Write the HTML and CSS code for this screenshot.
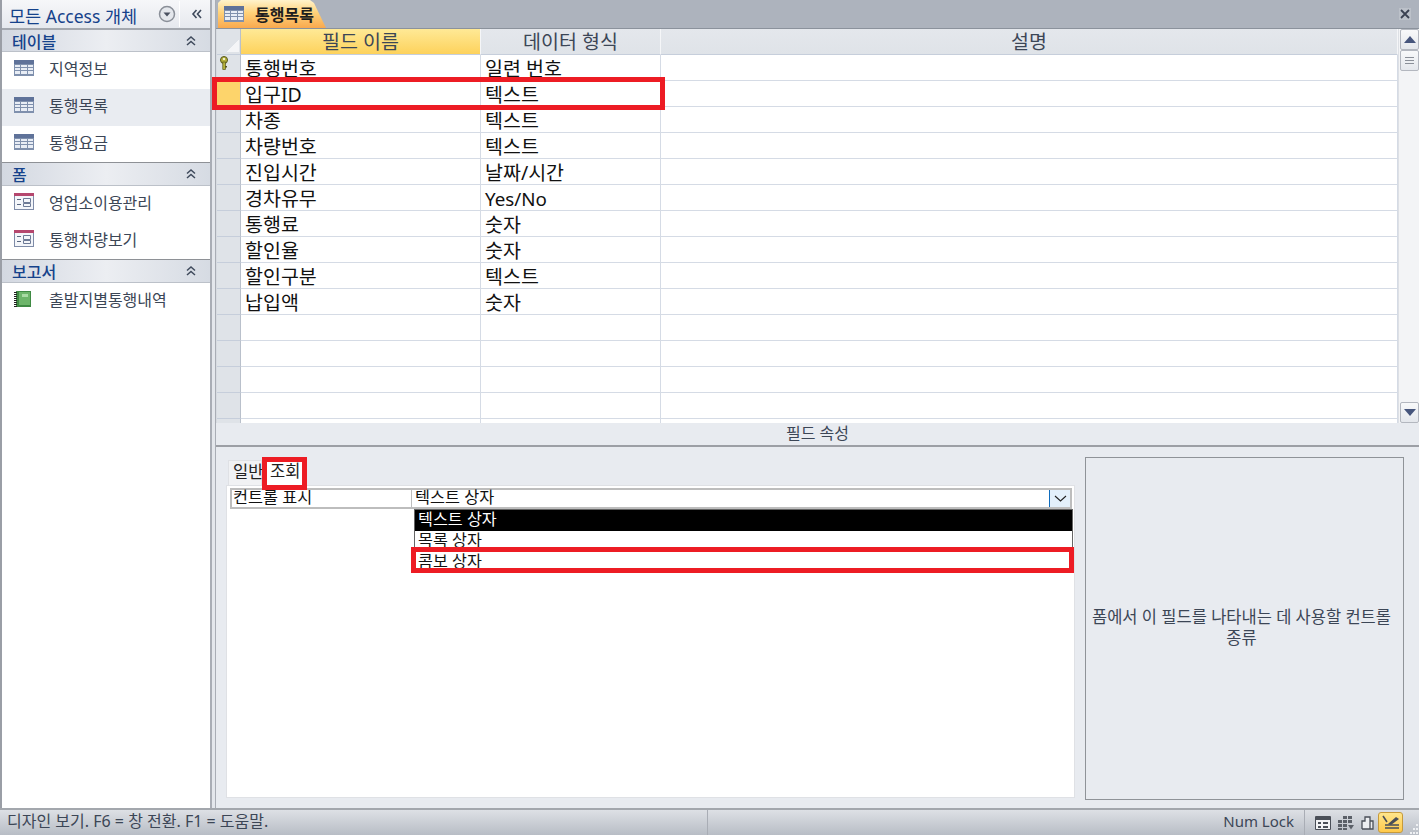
FILE: index.html
```html
<!DOCTYPE html>
<html lang="ko">
<head>
<meta charset="utf-8">
<title>통행목록</title>
<link rel="stylesheet" href="styles.css">
</head>
<body>
<svg class="defs" width="0" height="0" aria-hidden="true">
  <symbol id="i-table" viewBox="0 0 20 16">
    <rect x="0" y="0" width="20" height="16" fill="#7f90ad"/>
    <rect x="0" y="0" width="20" height="4" fill="#5f7299"/>
    <path d="M1 5h5v2H1zM7 5h6v2H7zM14 5h5v2h-5zM1 8h5v2H1zM7 8h6v2H7zM14 8h5v2h-5zM1 11h5v3H1zM7 11h6v3H7zM14 11h5v3h-5z" fill="#e8edf5"/>
  </symbol>
  <symbol id="i-form" viewBox="0 0 20 17">
    <rect x="0" y="0" width="20" height="17" fill="#7f8ca8"/>
    <rect x="1" y="3" width="18" height="13" fill="#f4f6fa"/>
    <rect x="0" y="0" width="20" height="3" fill="#b5476e"/>
    <path d="M3 6h4v1H3zM3 11h4v1H3z" fill="#5a6780"/>
    <path d="M9.500 5.500h7v4h-7zM9.500 10.500h7v3h-7z" fill="none" stroke="#6d7a96"/>
  </symbol>
  <symbol id="i-report" viewBox="0 0 17 16">
    <rect x="2" y="0" width="15" height="16" fill="#3f8a43"/>
    <rect x="5" y="1" width="11" height="13" fill="#6db56a"/>
    <rect x="8" y="3" width="6" height="3" fill="#a9dba4"/>
    <path d="M0 1h3v1H0zM0 3h3v1H0zM0 5h3v1H0zM0 7h3v1H0zM0 9h3v1H0zM0 11h3v1H0zM0 13h3v1H0zM0 15h3v1H0z" fill="#222"/>
  </symbol>
  <symbol id="i-up2" viewBox="0 0 12 12">
    <path d="M2 5.500 6 2l4 3.500M2 10 6 6.500l4 3.500" fill="none" stroke="#3f4a5c" stroke-width="1.500"/>
  </symbol>
</svg>

<div class="app">
  <nav class="nav">
    <div class="nav-head">
      <span class="nav-title">모든 Access 개체</span>
      <svg class="nav-drop" width="18" height="18" viewBox="0 0 18 18"><circle cx="9" cy="9" r="7.500" fill="#e4e7ec" stroke="#8a8f98" stroke-width="1.500"/><path d="M5.500 7.500h7L9 11.500z" fill="#4a5160"/></svg>
      <span class="nav-sep"></span>
      <svg class="nav-collapse" width="12" height="12" viewBox="0 0 12 12"><path d="M5.500 2 2 6l3.500 4M10 2 6.500 6l3.500 4" fill="none" stroke="#3f4a5c" stroke-width="1.600"/></svg>
    </div>
    <div class="group">테이블<svg class="up2"><use href="#i-up2"/></svg></div>
    <div class="item"><svg class="ic-t"><use href="#i-table"/></svg>지역정보</div>
    <div class="item sel"><svg class="ic-t"><use href="#i-table"/></svg>통행목록</div>
    <div class="item"><svg class="ic-t"><use href="#i-table"/></svg>통행요금</div>
    <div class="group">폼<svg class="up2"><use href="#i-up2"/></svg></div>
    <div class="item"><svg class="ic-f"><use href="#i-form"/></svg>영업소이용관리</div>
    <div class="item"><svg class="ic-f"><use href="#i-form"/></svg>통행차량보기</div>
    <div class="group">보고서<svg class="up2"><use href="#i-up2"/></svg></div>
    <div class="item"><svg class="ic-r"><use href="#i-report"/></svg>출발지별통행내역</div>
  </nav>
  <div class="split"></div>
  <main class="main">
    <div class="tabbar">
      <div class="doc-tab"><svg class="ic-d"><use href="#i-table"/></svg>통행목록</div>
      <span class="close"><svg width="10" height="10" viewBox="0 0 10 10"><path d="M1 1l8 8M9 1l-8 8" stroke="#3b4252" stroke-width="1.800"/></svg></span>
    </div>
    <div class="design">
      <div class="grid">
        <div class="sel-cell head-corner"><span class="corner"></span></div>
        <div class="hcell hcur">필드 이름</div>
        <div class="hcell">데이터 형식</div>
        <div class="hcell">설명</div>

        <div class="sel-cell"><svg class="key" width="10" height="14" viewBox="0 0 10 14"><circle cx="5" cy="4" r="3.500" fill="#b6b23c" stroke="#55561c"/><rect x="3.800" y="6" width="2.600" height="7.500" fill="#b6b23c" stroke="#55561c" stroke-width=".7"/><rect x="6" y="10" width="2" height="1.500" fill="#55561c"/><circle cx="5" cy="3" r="1" fill="#fff"/></svg></div><div class="cell">통행번호</div><div class="cell">일련 번호</div><div class="cell"></div>
        <div class="sel-cell cur"></div><div class="cell">입구ID</div><div class="cell">텍스트</div><div class="cell"></div>
        <div class="sel-cell"></div><div class="cell">차종</div><div class="cell">텍스트</div><div class="cell"></div>
        <div class="sel-cell"></div><div class="cell">차량번호</div><div class="cell">텍스트</div><div class="cell"></div>
        <div class="sel-cell"></div><div class="cell">진입시간</div><div class="cell">날짜/시간</div><div class="cell"></div>
        <div class="sel-cell"></div><div class="cell">경차유무</div><div class="cell"><span class="latin">Yes/No</span></div><div class="cell"></div>
        <div class="sel-cell"></div><div class="cell">통행료</div><div class="cell">숫자</div><div class="cell"></div>
        <div class="sel-cell"></div><div class="cell">할인율</div><div class="cell">숫자</div><div class="cell"></div>
        <div class="sel-cell"></div><div class="cell">할인구분</div><div class="cell">텍스트</div><div class="cell"></div>
        <div class="sel-cell"></div><div class="cell">납입액</div><div class="cell">숫자</div><div class="cell"></div>
        <div class="sel-cell"></div><div class="cell"></div><div class="cell"></div><div class="cell"></div>
        <div class="sel-cell"></div><div class="cell"></div><div class="cell"></div><div class="cell"></div>
        <div class="sel-cell"></div><div class="cell"></div><div class="cell"></div><div class="cell"></div>
        <div class="sel-cell"></div><div class="cell"></div><div class="cell"></div><div class="cell"></div>
        <div class="sel-cell"></div><div class="cell"></div><div class="cell"></div><div class="cell"></div>
      </div>
      <div class="vscroll">
        <div class="sbtn"><svg width="12" height="7" viewBox="0 0 12 7"><path d="M6 0l6 7H0z" fill="#46557c"/></svg></div>
        <div class="sbtn"><svg width="9" height="7" viewBox="0 0 9 7"><path d="M0 .5h9M0 3.500h9M0 6.500h9" stroke="#8a8f98"/></svg></div>
        <div class="strack"></div>
        <div class="sbtn"><svg width="12" height="7" viewBox="0 0 12 7"><path d="M0 0h12L6 7z" fill="#46557c"/></svg></div>
      </div>
      <div class="red red-row"></div>
    </div>
    <div class="prop-title">필드 속성</div>
    <div class="props">
      <div class="sheet-wrap">
        <div class="ptabs">
          <div class="ptab">일반</div>
          <div class="ptab on">조회</div>
        </div>
        <div class="sheet">
          <div class="prow">
            <div class="plabel">컨트롤 표시</div>
            <div class="pvalue"><span>텍스트 상자</span><span class="dropbtn"><svg width="13" height="7" viewBox="0 0 13 7"><path d="M1 1l5.500 5L12 1" fill="none" stroke="#222" stroke-width="1.100"/></svg></span></div>
          </div>
          <div class="list">
            <div class="opt hot">텍스트 상자</div>
            <div class="opt">목록 상자</div>
            <div class="opt">콤보 상자</div>
          </div>
          <div class="red red-opt"></div>
        </div>
        <div class="red red-tab"></div>
      </div>
      <div class="help"><span class="help-text">폼에서 이 필드를 나타내는 데 사용할 컨트롤 종류</span></div>
    </div>
  </main>
</div>
<footer class="status">
  <div class="st-text">디자인 보기. F6 = 창 전환. F1 = 도움말.</div>
  <div class="st-num">Num Lock</div>
  <div class="st-icons">
    <svg class="st-ic" width="16" height="14" viewBox="0 0 16 14"><path d="M.5.5h15v13H.5z" fill="#f2f3f5" stroke="#4a4f58"/><path d="M1 1h14v3H1z" fill="#4a4f58"/><path d="M3 6h3v2H3zM3 10h3v2H3zM8 6h5v2H8zM8 10h5v2H8z" fill="#4a4f58"/></svg>
    <svg class="st-ic" width="16" height="14" viewBox="0 0 16 14"><path d="M5 0h4v3H5zM10 0h4v3h-4zM0 4h4v3H0zM5 4h4v3H5zM10 4h4v3h-4zM0 8h4v3H0zM5 8h4v3H5zM0 12h4v2H0zM5 12h4v2H5z" fill="#5b6068"/><path d="M10 9h6l-3 4.500z" fill="#5b6068"/></svg>
    <svg class="st-ic" width="16" height="14" viewBox="0 0 16 14"><path d="M1 13V5h3V1h5v12M9 5h3v8H1" fill="#eceef1" stroke="#4a4f58" stroke-width="1.300"/></svg>
    <span class="st-active"><svg width="18" height="16" viewBox="0 0 18 16"><path d="M1 1l4 6M3 10h14M3 13h14" stroke="#4a4f58" stroke-width="1.600" fill="none"/><path d="M6 9l8-7 3 2-8 6z" fill="#4a4f58"/></svg></span>
    <svg class="grip" width="9" height="12" viewBox="0 0 9 12"><path d="M6 1h2v2H6zM3 5h2v2H3zM6 5h2v2H6zM0 9h2v2H0zM3 9h2v2H3zM6 9h2v2H6z" fill="#eef0f3"/></svg>
  </div>
</footer>
</body>
</html>
```
FILE: styles.css
```css
* { box-sizing: border-box; }
html, body { margin: 0; padding: 0; }
body {
  width: 1419px;
  height: 835px;
  overflow: hidden;
  display: flex;
  flex-direction: column;
  background: #e8ebf0;
  font-family: "Noto Sans", "Noto Sans CJK KR", sans-serif;
  color: #111;
}
.defs { position: absolute; }
.app { flex: 1; min-height: 0; display: flex; }

/* navigation pane */
.nav {
  width: 212px;
  background: #fff;
  border-left: 2px solid #9a9ea6;
  border-right: 2px solid #a9adb5;
  display: flex;
  flex-direction: column;
}
.nav-head {
  height: 30px;
  display: flex;
  align-items: center;
  padding-left: 7px;
  background: linear-gradient(#f6f7f9, #e6e9ee);
  border-bottom: 2px solid #a4a8af;
}
.nav-title { color: #15428b; font-size: 17.500px; width: 149px; white-space: nowrap; line-height: 28px; padding-top: 3px; }
.nav-sep { width: 1px; height: 26px; background: #fff; margin-left: 3px; }
.nav-collapse { margin-left: 11px; }
.group {
  height: 22px;
  display: flex;
  align-items: center;
  justify-content: space-between;
  padding: 0 13px 0 10px;
  font-size: 16px;
  font-weight: 500;
  color: #15428b;
  background: linear-gradient(90deg, #d3d8e1, #eceef2 50%, #d6dbe3);
  border-top: 1px solid #8e9196;
  border-bottom: 1px solid #bcc1c9;
  box-sizing: content-box;
  margin-top: -1px;
}
.nav-head + .group { border-top: 0; margin-top: 0; height: 21px; }
.up2 { width: 12px; height: 12px; }
.item {
  height: 37px;
  display: flex;
  align-items: center;
  padding: 0 0 6px 12px;
  color: #3c4656;
  font-size: 16px;
  white-space: nowrap;
}
.item.sel { background: #e9ecf1; }
.ic-t { width: 20px; height: 16px; margin-right: 15px; flex: none; }
.ic-f { width: 20px; height: 17px; margin-right: 15px; flex: none; }
.ic-r { width: 17px; height: 16px; margin-right: 18px; flex: none; }
.split { width: 4px; background: #e4e7ec; border-right: 1px solid #a9adb5; }

/* main */
.main { flex: 1; min-width: 0; display: flex; flex-direction: column; }
.tabbar {
  height: 29px;
  flex: none;
  background: #adb3bd;
  border-bottom: 1px solid #8b929c;
  display: flex;
  align-items: flex-end;
  justify-content: space-between;
  padding: 0 8px 0 2px;
}
.doc-tab {
  width: 108px;
  height: 28px;
  display: flex;
  align-items: center;
  padding-left: 5px;
  font-size: 16px;
  font-weight: 700;
  color: #1e1e1e;
  background: linear-gradient(#fff3cc, #ffd27a 45%, #f9a94e);
  clip-path: polygon(0 100%, 0 3px, 3px 0, 92px 0, 96px 3px, 108px 100%);
  white-space: nowrap;
}
.ic-d { width: 22px; height: 16px; margin-right: 10px; flex: none; }
.close { align-self: center; width: 12px; height: 12px; display: flex; align-items: center; justify-content: center; background: #bcc1c9; }

/* design grid */
.design { height: 394px; flex: none; display: flex; position: relative; background: #fff; }
.grid {
  flex: 1;
  overflow: hidden;
  display: grid;
  grid-template-columns: 24px 240px 180px 1fr;
  grid-auto-rows: 26px;
  border-left: 1px solid #d7dbe1;
}
.sel-cell {
  background: #dfe3e8;
  border-bottom: 1px solid #c6cedb;
  border-right: 1px solid #b9c0cb;
  padding: 1px 0 0 2px;
}
.sel-cell.cur { background: #fdd46b; }
.head-corner { display: flex; justify-content: flex-end; align-items: flex-end; padding: 0 1px 2px 0; }
.corner { width: 13px; height: 13px; background: linear-gradient(135deg, transparent 50%, #f4f5f7 50%); }
.key { display: block; }
.hcell {
  background: linear-gradient(#e4e7ec, #dfe3e8);
  border-right: 1px solid #f5f6f8;
  border-bottom: 1px solid #c6cedb;
  color: #3c4656;
  font-size: 19.500px;
  line-height: 25px;
  text-align: center;
  white-space: nowrap;
}
.hcell.hcur { background: linear-gradient(#ffe996, #fdd25c); }
.cell {
  background: #fff;
  border-right: 1px solid #d5dbe5;
  border-bottom: 1px solid #d5dbe5;
  font-size: 19.500px;
  line-height: 27px;
  padding-left: 4px;
  white-space: nowrap;
  color: #111;
}
.latin { font-size: 18.800px; }
.vscroll { width: 21px; flex: none; display: flex; flex-direction: column; align-items: flex-end; background: #f3f4f6; border-left: 1px solid #dde0e5; }
.sbtn {
  width: 19px;
  height: 21px;
  flex: none;
  display: flex;
  align-items: center;
  justify-content: center;
  background: linear-gradient(#f8f9fa, #e4e7ec);
  border: 1px solid #b3b7bf;
  border-radius: 2px;
}
.strack { flex: 1; }
.red { position: absolute; border: 5px solid #ed1c24; pointer-events: none; }
.red-row { left: -4px; top: 48px; width: 453px; height: 33px; }

/* property pane */
.prop-title {
  flex: none;
  height: 24px;
  background: #e8ebf0;
  border-bottom: 2px solid #9c9fa5;
  font-size: 16px;
  line-height: 21px;
  text-align: center;
  color: #3c4656;
}
.props { flex: 1; min-height: 0; display: flex; padding: 10px 15px 8px 10px; gap: 10px; }
.sheet-wrap { width: 849px; position: relative; display: flex; flex-direction: column; padding-top: 3px; }
.ptabs { display: flex; height: 25px; padding-left: 2px; align-items: flex-end; }
.ptab { height: 25px; font-size: 16.500px; line-height: 21px; padding: 0 0 0 4px; width: 34px; background: #f1f2f4; border: 1px solid #dfe1e5; border-bottom: 0; color: #222; white-space: nowrap; }
.ptab.on { background: #fff; border: 0; padding-left: 8px; width: 40px; }
.sheet {
  position: relative;
  height: 313px;
  background: #fff;
  border: 1px solid #dfe1e5;
  padding: 2px 2px 0 3px;
}
.prow { display: flex; height: 21px; font-size: 16.300px; line-height: 15px; }
.plabel { width: 182px; border: 2px solid #bdbdbd; padding-left: 1px; border-right-width: 1px; white-space: nowrap; }
.pvalue { flex: 1; display: flex; justify-content: space-between; border: 2px solid #bdbdbd; border-left: 0; padding-left: 3px; }
.dropbtn { width: 21px; background: #e3f0fb; border-left: 1px solid #0f6cbd; display: flex; align-items: center; justify-content: center; }
.list { margin-left: 184px; width: 659px; border: 1px solid #666; border-bottom: 0; font-size: 16.200px; }
.opt { height: 21px; line-height: 18px; padding-left: 3px; }
.opt.hot { background: #000; color: #fff; }
.red-opt { left: 184px; top: 61px; width: 663px; height: 26px; }
.red-tab { left: 36px; top: 0; width: 45px; height: 33px; }
.help {
  width: 319px;
  flex: none;
  border: 1px solid #8f9398;
  display: flex;
  align-items: center;
  justify-content: center;
  text-align: center;
  padding: 0 9px 3px 3px;
  font-size: 16.500px;
  line-height: 21px;
  color: #3c4656;
}
.help-text { display: block; }

/* status bar */
.status {
  height: 27px;
  flex: none;
  display: flex;
  align-items: center;
  border-top: 2px solid #a3a7ad;
  background: linear-gradient(#dde0e5, #b8bdc5);
  color: #3c4656;
  font-size: 16px;
}
.st-text { width: 708px; padding-left: 7px; height: 100%; line-height: 22px; border-right: 1px solid #a9adb5; white-space: nowrap; }
.st-num { flex: 1; text-align: right; padding-right: 10px; font-size: 15px; height: 100%; line-height: 22px; }
.st-icons { display: flex; align-items: center; height: 100%; border-left: 1px solid #a9adb5; padding-left: 10px; gap: 7px; width: 115px; }
.st-active { width: 25px; height: 21px; display: flex; align-items: center; justify-content: center; background: linear-gradient(#ffe68c, #ffc94a); border: 1px solid #c79a3a; border-radius: 3px; margin-left: -6px; flex: none; }
.grip { margin: 12px 0 0 0; flex: none; }
```
